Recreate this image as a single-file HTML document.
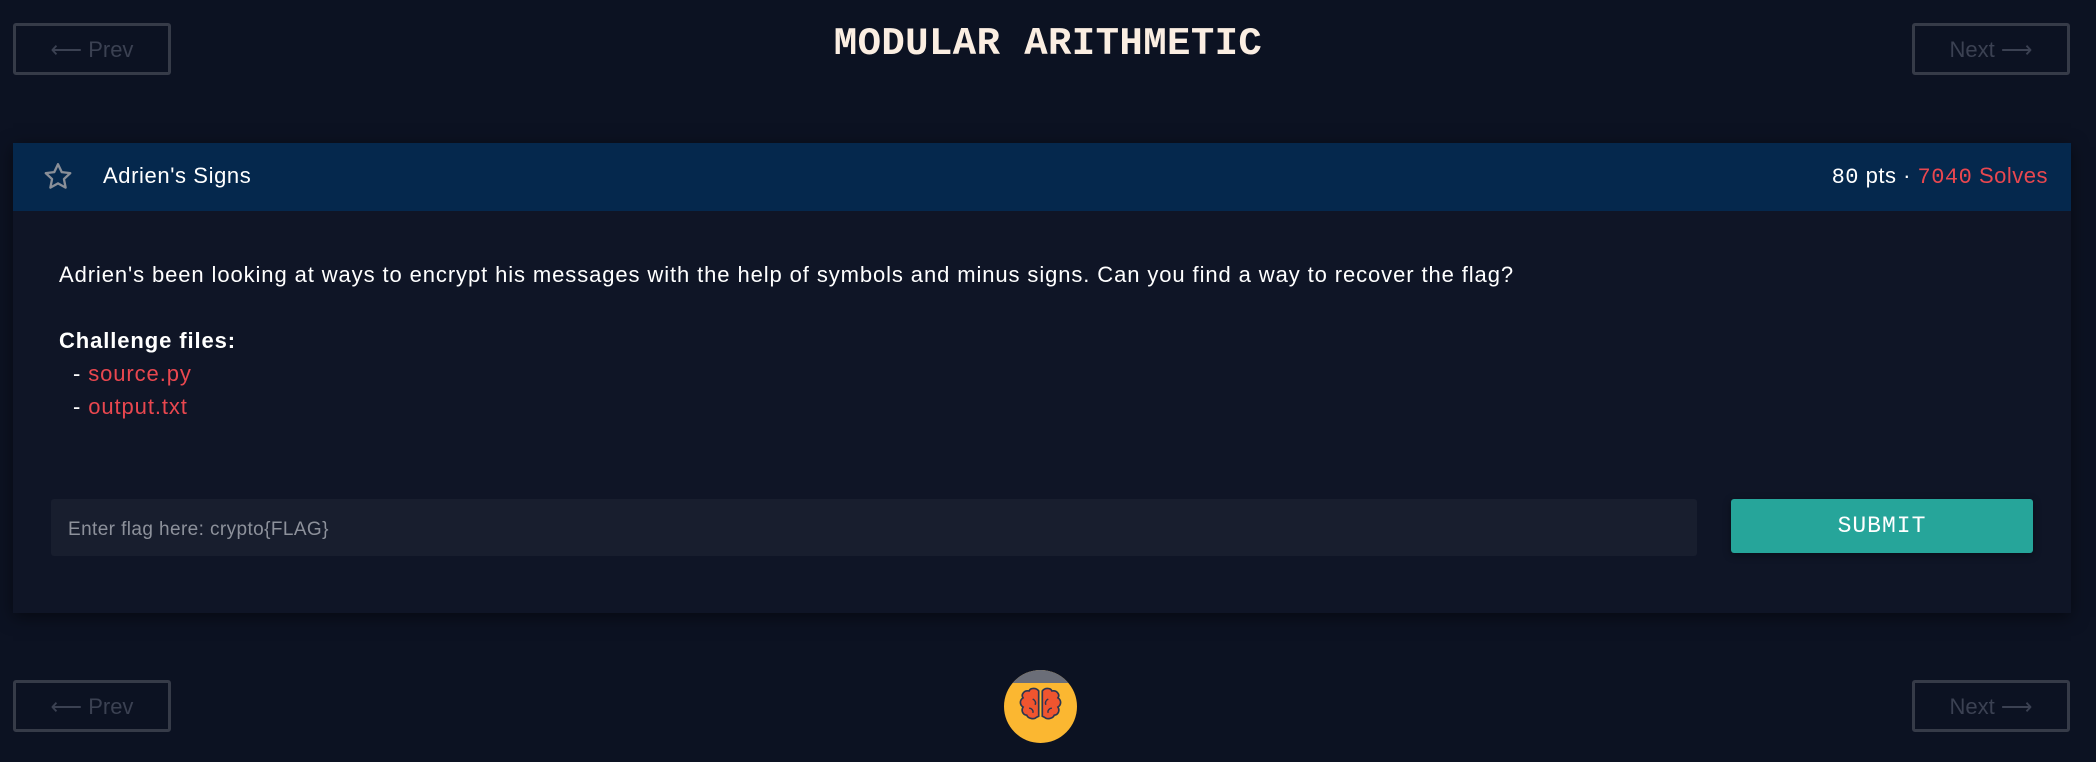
<!DOCTYPE html>
<html><head><meta charset="utf-8"><style>
*{margin:0;padding:0;box-sizing:border-box}
body{width:2096px;height:762px;background:#0c1222;font-family:"Liberation Sans",sans-serif;position:relative;overflow:hidden;color:#f4efe9}
.nav{position:absolute;width:158px;height:52px;border:3px solid #363b48;border-radius:3px;color:#3b4152;font-size:22px;display:flex;align-items:center;justify-content:center;padding-top:2px}
h1{position:absolute;top:22px;left:0;width:2096px;text-align:center;font-family:"Liberation Mono",monospace;font-weight:bold;font-size:39px;color:#fbeee2;letter-spacing:.4px}
.card{position:absolute;left:13px;top:143px;width:2058px;height:470px;background:#0f1526;box-shadow:0 4px 16px rgba(0,0,0,.5)}
.hd{height:68px;background:#05284d;position:relative}
.hd .t{position:absolute;left:90px;top:20px;font-size:22px;color:#fff;letter-spacing:.6px}
.hd .r{position:absolute;right:23px;top:20px;font-size:22px;color:#fff;letter-spacing:.5px}
.mono{font-family:"Liberation Mono",monospace}
.red{color:#e9474f}
.desc{position:absolute;left:46px;top:115px;font-size:22px;color:#fff;line-height:33px;letter-spacing:.9px}
.in{position:absolute;left:38px;top:356px;width:1646px;height:57px;background:#181e2e;border-radius:3px;color:#8d919b;font-size:19px;padding:20px 0 0 17px;letter-spacing:.4px}
.sb{position:absolute;left:1718px;top:356px;width:302px;height:54px;background:#26a59a;border-radius:3px;color:#fff;font-family:"Liberation Mono",monospace;font-size:23px;text-align:center;line-height:54px;letter-spacing:1px;box-shadow:0 2px 8px rgba(0,0,0,.4)}
</style></head><body>
<div class="nav" style="left:13px;top:23px">⟵ Prev</div>
<div class="nav" style="left:1912px;top:23px">Next ⟶</div>
<h1>MODULAR ARITHMETIC</h1>
<div class="card">
 <div class="hd">
  <svg style="position:absolute;left:29px;top:18px" width="32" height="31" viewBox="0 0 24 24"><path d="M12 2.5l2.9 6.1 6.6.8-4.9 4.6 1.3 6.6L12 17.3l-5.9 3.3 1.3-6.6-4.9-4.6 6.6-.8z" fill="none" stroke="#8a8f98" stroke-width="1.8" stroke-linejoin="round"/></svg>
  <div class="t">Adrien's Signs</div>
  <div class="r"><span class="mono">80</span> pts · <span class="red"><span class="mono">7040</span> Solves</span></div>
 </div>
 <div class="desc">Adrien's been looking at ways to encrypt his messages with the help of symbols and minus signs. Can you find a way to recover the flag?<br><br><b>Challenge files:</b><br>&nbsp; - <span class="red">source.py</span><br>&nbsp; - <span class="red">output.txt</span></div>
 <div class="in">Enter flag here: crypto{FLAG}</div>
 <div class="sb">SUBMIT</div>
</div>
<div class="nav" style="left:13px;top:680px">⟵ Prev</div>
<div class="nav" style="left:1912px;top:680px">Next ⟶</div>
<svg style="position:absolute;left:1004px;top:670px" width="73" height="73" viewBox="0 0 73 73">
 <defs><clipPath id="c"><circle cx="36.5" cy="36.5" r="36.5"/></clipPath></defs>
 <g clip-path="url(#c)"><rect width="73" height="73" fill="#fbb731"/><rect width="73" height="13" fill="#6b6e78"/></g>
 <g transform="translate(36.5 36.5) scale(1.2 1.15) translate(-36.5 -30.5)">
 <path d="M35 17c-2-3-7-3-8 0-4-1-7 3-5 6-3 2-3 6 0 8-2 3 0 7 3 7 1 3 6 4 8 2l2-1z" fill="#f0552f" stroke="#2c3550" stroke-width="1.4"/>
 <path d="M38 17c2-3 7-3 8 0 4-1 7 3 5 6 3 2 3 6 0 8 2 3 0 7-3 7-1 3-6 4-8 2l-2-1z" fill="#f0552f" stroke="#2c3550" stroke-width="1.4"/>
 <path d="M30 24c2 1 3 3 2 5M27 32c2 0 4 2 3 4M43 24c-2 1-3 3-2 5M46 32c-2 0-4 2-3 4" fill="none" stroke="#2c3550" stroke-width="1.2"/>
 </g>
</svg>
</body></html>
